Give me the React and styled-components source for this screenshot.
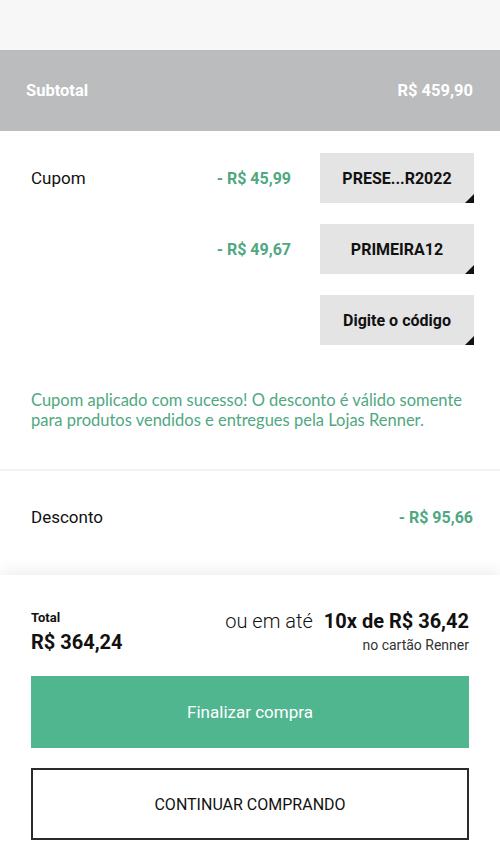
import React from 'react';
import styled, { createGlobalStyle } from 'styled-components';

const GlobalStyle = createGlobalStyle`
  body {
    margin: 0;
    background: #fff;
    font-family: Roboto, "Liberation Sans", sans-serif;
    color: #111;
  }
`;

const green = '#4fa881';

const Page = styled.div`
  width: 500px;
  height: 850px;
  overflow: hidden;
  display: flex;
  flex-direction: column;
`;

const TopStrip = styled.div`
  height: 50px;
  background: #f7f7f7;
`;

const SubtotalBar = styled.div`
  height: 81px;
  background: #bbbcbe;
  display: flex;
  align-items: center;
  justify-content: space-between;
  padding: 0 27px 0 26px;
  color: #fff;
  font-size: 16.5px;
  font-weight: 700;
`;

const CouponSection = styled.section`
  padding: 22px 26px 0 31px;
  height: 316px;
  border-bottom: 2px solid #f2f2f2;
  display: flex;
  flex-direction: column;
`;

const CouponList = styled.div`
  display: flex;
  flex-direction: column;
  gap: 21px;
`;

const CouponRow = styled.div`
  display: flex;
  align-items: center;
  height: 50px;
`;

const Label = styled.span`
  font-size: 17px;
  flex: 1;
`;

const Amount = styled.span`
  color: ${green};
  font-size: 16px;
  font-weight: 700;
  margin-right: ${p => (p.$end ? 0 : 29)}px;
`;

const CodeButton = styled.button`
  position: relative;
  width: 154px;
  height: 50px;
  border: none;
  background: #e4e4e4;
  font-family: Roboto, "Liberation Sans", sans-serif;
  font-size: 16px;
  font-weight: 700;
  color: #111;
  padding: 0;

  &::after {
    content: '';
    position: absolute;
    right: 0;
    bottom: 0;
    border-style: solid;
    border-width: 0 0 9px 9px;
    border-color: transparent transparent #111 transparent;
  }
`;

const Message = styled.p`
  margin: 45px 0 0;
  font-family: Lato, "Open Sans", sans-serif;
  font-size: 16.5px;
  line-height: 20px;
  color: ${green};
`;

const DiscountSection = styled.section`
  height: 104px;
  box-sizing: border-box;
  display: flex;
  align-items: center;
  justify-content: space-between;
  padding: 0 27px 12px 31px;
`;

const Footer = styled.footer`
  flex: 1;
  background: #fff;
  box-shadow: 0 -6px 14px rgba(0, 0, 0, 0.06);
  padding: 34px 31px 0;
  display: flex;
  flex-direction: column;
`;

const Summary = styled.div`
  display: flex;
  justify-content: space-between;
  align-items: flex-start;
`;

const TotalBlock = styled.div`
  display: flex;
  flex-direction: column;
  padding-top: 1px;
`;

const TotalLabel = styled.span`
  font-size: 13px;
  font-weight: 700;
  line-height: 16px;
`;

const TotalValue = styled.span`
  font-size: 20px;
  font-weight: 700;
  line-height: 24px;
  margin-top: 4px;
`;

const Installments = styled.div`
  display: flex;
  flex-direction: column;
  align-items: flex-end;
`;

const InstallLine = styled.div`
  font-size: 20px;
  line-height: 24px;
  font-weight: 300;

  strong {
    font-weight: 700;
    margin-left: 11px;
  }
`;

const InstallNote = styled.span`
  font-size: 14px;
  line-height: 18px;
  color: #333;
  margin-top: 3px;
`;

const PrimaryButton = styled.button`
  margin-top: 22px;
  height: 72px;
  border: none;
  background: #4fb68f;
  color: #fff;
  font-family: Roboto, "Liberation Sans", sans-serif;
  font-size: 17px;
`;

const OutlineButton = styled.button`
  margin-top: 20px;
  height: 72px;
  border: 2px solid #2b2b2b;
  background: #fff;
  color: #111;
  font-family: Roboto, "Liberation Sans", sans-serif;
  font-size: 16px;
`;

const coupons = [
  { label: 'Cupom', amount: '- R$ 45,99', code: 'PRESE...R2022' },
  { label: '', amount: '- R$ 49,67', code: 'PRIMEIRA12' },
  { label: '', amount: '', code: 'Digite o código' },
];

export default function App() {
  return (
    <Page>
      <GlobalStyle />
      <TopStrip />
      <SubtotalBar>
        <span>Subtotal</span>
        <span>R$ 459,90</span>
      </SubtotalBar>
      <CouponSection>
        <CouponList>
          {coupons.map(c => (
            <CouponRow key={c.code}>
              <Label>{c.label}</Label>
              <Amount>{c.amount}</Amount>
              <CodeButton>{c.code}</CodeButton>
            </CouponRow>
          ))}
        </CouponList>
        <Message>
          Cupom aplicado com sucesso! O desconto é válido somente para produtos
          vendidos e entregues pela Lojas Renner.
        </Message>
      </CouponSection>
      <DiscountSection>
        <Label>Desconto</Label>
        <Amount $end>- R$ 95,66</Amount>
      </DiscountSection>
      <Footer>
        <Summary>
          <TotalBlock>
            <TotalLabel>Total</TotalLabel>
            <TotalValue>R$ 364,24</TotalValue>
          </TotalBlock>
          <Installments>
            <InstallLine>
              ou em até<strong>10x de R$ 36,42</strong>
            </InstallLine>
            <InstallNote>no cartão Renner</InstallNote>
          </Installments>
        </Summary>
        <PrimaryButton>Finalizar compra</PrimaryButton>
        <OutlineButton>CONTINUAR COMPRANDO</OutlineButton>
      </Footer>
    </Page>
  );
}
